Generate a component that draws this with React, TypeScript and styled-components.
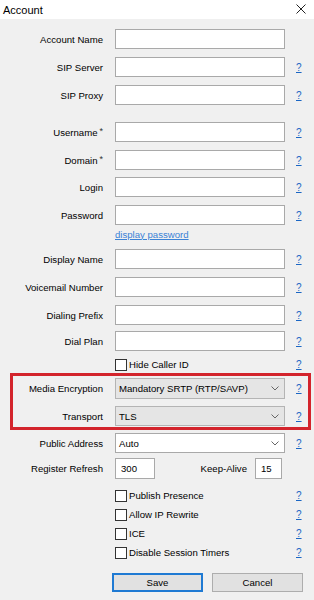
import styled, { createGlobalStyle } from "styled-components";

const GlobalStyle = createGlobalStyle`
    html, body {
        margin: 0;
        padding: 0;
        background: #f0f0f0;
    }
    body {
        font-family: "Liberation Sans", Arial, sans-serif;
        font-size: 9.6px;
        color: #000;
    }
`;

/* 창 전체 */
const Window = styled.div`
    width: 314px;
    height: 600px;
    background: #f0f0f0;
    display: flex;
    flex-direction: column;
    overflow: hidden;
`;

const TitleBar = styled.div`
    height: 19px;
    background: #fff;
    display: flex;
    align-items: center;
    justify-content: space-between;
    padding: 0 8px 0 3px;
    font-size: 11px;
    color: #000;
    flex-shrink: 0;
`;

const CloseIcon = styled.svg`
    width: 10px;
    height: 10px;
    margin-top: -2px;
`;

const Form = styled.div`
    display: flex;
    flex-direction: column;
`;

type RowProps = { $top?: number; $height?: number; $label?: number };

const Row = styled.div<RowProps>`
    display: grid;
    grid-template-columns: ${(p) => p.$label ?? 115}px 170px 1fr;
    align-items: center;
    height: ${(p) => p.$height ?? 20}px;
    margin-top: ${(p) => p.$top ?? 8}px;
`;

const Label = styled.div`
    text-align: right;
    padding-right: 12px;
    white-space: nowrap;
`;

const Star = styled.span`
    font-size: 9px;
    margin-left: 2px;
    vertical-align: 2px;
    color: #333;
`;

const TextBox = styled.input<{ $width?: number }>`
    box-sizing: border-box;
    width: ${(p) => (p.$width ? `${p.$width}px` : "100%")};
    height: 100%;
    border: 1px solid #a9a9a9;
    background: #fff;
    margin: 0;
    padding: 0 5px;
    font: inherit;
    outline: none;
`;

const Help = styled.a`
    justify-self: start;
    margin-left: 11px;
    color: #1a66c4;
    text-decoration: underline;
    font-size: 10px;
    cursor: pointer;
`;

const LinkText = styled.a`
    grid-column: 2;
    color: #3b82d6;
    text-decoration: underline;
`;

const Select = styled.div<{ $gray?: boolean }>`
    box-sizing: border-box;
    height: 100%;
    border: 1px solid ${(p) => (p.$gray ? "#b4b4b4" : "#a9a9a9")};
    background: ${(p) => (p.$gray ? "#e5e5e5" : "#fff")};
    display: flex;
    align-items: center;
    justify-content: space-between;
    padding: 0 5px 0 3px;
`;

const Chevron = styled.svg`
    width: 8px;
    height: 5px;
`;

const Highlight = styled.div`
    margin: 2px 3px 0 10px;
    border: 3px solid #d3242c;
    padding: 2px 0 1px;
`;

const CheckLine = styled.label`
    grid-column: 2;
    display: flex;
    align-items: center;
    gap: 2px;
    white-space: nowrap;
`;

const CheckBox = styled.span`
    box-sizing: border-box;
    width: 12px;
    height: 12px;
    border: 1px solid #333;
    background: #fff;
    flex-shrink: 0;
`;

const Pair = styled.div`
    grid-column: 2;
    display: flex;
    align-items: center;
    height: 100%;
    padding-right: 3px;
`;

const PairLabel = styled.div`
    flex: 1;
    text-align: right;
    padding-right: 8px;
`;

const ButtonBar = styled.div`
    display: flex;
    gap: 9px;
    padding-left: 112px;
    margin-top: 14px;
`;

const Button = styled.button<{ $primary?: boolean }>`
    box-sizing: border-box;
    width: 91px;
    height: 19px;
    margin: 0;
    padding: 0;
    background: #e1e1e1;
    border: ${(p) => (p.$primary ? "2px solid #1f7ad3" : "1px solid #adadad")};
    font: inherit;
    color: #000;
`;

type FieldProps = { label: string; required?: boolean; top?: number; help?: boolean };

const Field = ({ label, required, top, help = true }: FieldProps) => (
    <Row $top={top}>
        <Label>
            {label}
            {required && <Star>*</Star>}
        </Label>
        <TextBox readOnly />
        {help && <Help>?</Help>}
    </Row>
);

const Arrow = () => (
    <Chevron viewBox="0 0 8 5">
        <polyline points="0.5,0.5 4,4 7.5,0.5" fill="none" stroke="#666" strokeWidth="1" />
    </Chevron>
);

const checks = ["Publish Presence", "Allow IP Rewrite", "ICE", "Disable Session Timers"];

const App = () => {
    return (
        <Window>
            <GlobalStyle />
            <TitleBar>
                <span>Account</span>
                <CloseIcon viewBox="0 0 10 10">
                    <path d="M0.5 0.5 L9.5 9.5 M9.5 0.5 L0.5 9.5" stroke="#222" strokeWidth="1" />
                </CloseIcon>
            </TitleBar>
            <Form>
                <Field label="Account Name" top={10} help={false} />
                <Field label="SIP Server" />
                <Field label="SIP Proxy" />
                <Field label="Username" required top={17} />
                <Field label="Domain" required />
                <Field label="Login" top={7} />
                <Field label="Password" />
                <Row $top={2} $height={14}>
                    <span />
                    <LinkText>display password</LinkText>
                </Row>
                <Field label="Display Name" />
                <Field label="Voicemail Number" />
                <Field label="Dialing Prefix" />
                <Field label="Dial Plan" top={6} />
                <Row $top={7} $height={13}>
                    <span />
                    <CheckLine>
                        <CheckBox />
                        Hide Caller ID
                    </CheckLine>
                    <Help>?</Help>
                </Row>
                <Highlight>
                    <Row $top={0} $height={21} $label={102}>
                        <Label>Media Encryption</Label>
                        <Select $gray>
                            <span>Mandatory SRTP (RTP/SAVP)</span>
                            <Arrow />
                        </Select>
                        <Help>?</Help>
                    </Row>
                    <Row $top={7} $height={20} $label={102}>
                        <Label>Transport</Label>
                        <Select $gray>
                            <span>TLS</span>
                            <Arrow />
                        </Select>
                        <Help>?</Help>
                    </Row>
                </Highlight>
                <Row $top={3} $height={20}>
                    <Label>Public Address</Label>
                    <Select>
                        <span>Auto</span>
                        <Arrow />
                    </Select>
                    <Help>?</Help>
                </Row>
                <Row $top={5} $height={21}>
                    <Label>Register Refresh</Label>
                    <Pair>
                        <TextBox readOnly $width={40} defaultValue="300" />
                        <PairLabel>Keep-Alive</PairLabel>
                        <TextBox readOnly $width={27} defaultValue="15" />
                    </Pair>
                </Row>
                {checks.map((c, i) => (
                    <Row key={c} $top={i === 0 ? 10 : 6} $height={13}>
                        <span />
                        <CheckLine>
                            <CheckBox />
                            {c}
                        </CheckLine>
                        <Help>?</Help>
                    </Row>
                ))}
                <ButtonBar>
                    <Button $primary>Save</Button>
                    <Button>Cancel</Button>
                </ButtonBar>
            </Form>
        </Window>
    );
};

export default App;
